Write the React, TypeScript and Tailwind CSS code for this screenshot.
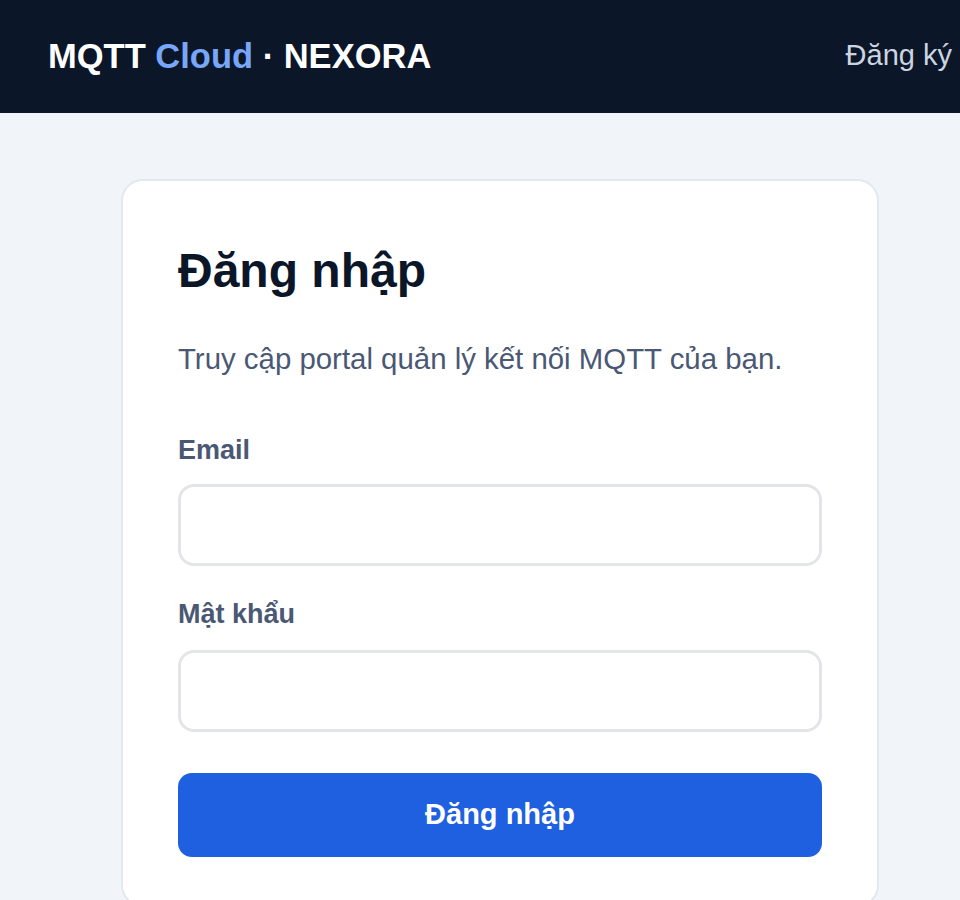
import React from 'react';

const fieldClass =
  "block w-full h-[82px] rounded-[16px] border-[3px] border-[#e3e5e9] bg-white px-5 text-[26px] text-[#0b1628] outline-none";

const labelClass = "block text-[27px] font-bold leading-[1.5] text-[#4a5874]";

const App = () => {
  return (
    <div className="min-w-[1000px] min-h-[900px] bg-[#f1f5f9] font-['Liberation_Sans',Arial,sans-serif]">
      <header className="h-[113px] bg-[#0b1628] flex items-center justify-between px-12">
        <div className="text-[34.5px] font-bold text-white leading-none">
          MQTT <span className="text-[#78a6f8]">Cloud</span> · NEXORA
        </div>
        <nav>
          <a href="#" className="text-[29px] text-[#cbd5e1] leading-none">Đăng ký</a>
        </nav>
      </header>

      <main className="pt-[66px] pb-12">
        <div className="mx-auto w-[758px] bg-white border-2 border-[#e2e8f0] rounded-[22px] px-[55px] pt-[61px] pb-12">
          <h1 className="text-[48px] font-bold leading-[1.2] text-[#0b1628]">Đăng nhập</h1>
          <p className="mt-[37px] text-[29.4px] leading-[1.5] text-[#4a5874]">
            Truy cập portal quản lý kết nối MQTT của bạn.
          </p>

          <form className="mt-[49px]" onSubmit={(e) => e.preventDefault()}>
            <label className={labelClass}>Email</label>
            <input type="email" className={`${fieldClass} mt-[14px]`} />

            <label className={`${labelClass} mt-[28px]`}>Mật khẩu</label>
            <input type="password" className={`${fieldClass} mt-[15px]`} />

            <button
              type="submit"
              className="mt-[41px] w-full h-[84px] rounded-[14px] bg-[#1f60e0] text-white text-[29px] font-bold"
            >
              Đăng nhập
            </button>
          </form>
        </div>
      </main>
    </div>
  );
};

export default App;
